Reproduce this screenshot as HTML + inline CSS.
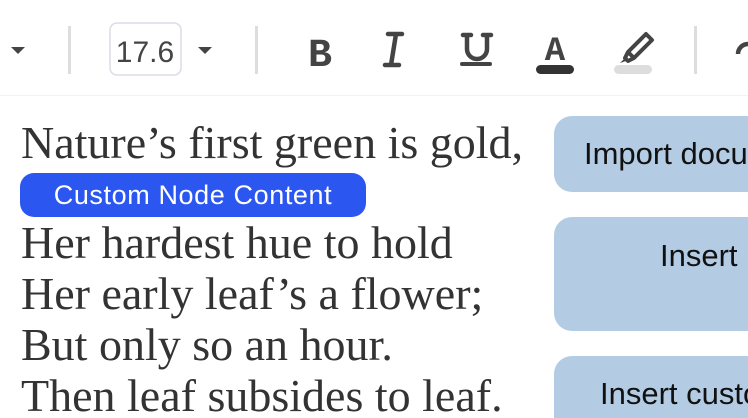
<!DOCTYPE html>
<html style="overflow:hidden"><head><meta charset="utf-8"><style>
html,body{overflow:hidden}
body{margin:0;width:748px;height:418px;background:#fff;position:relative;font-family:"Liberation Sans",sans-serif}
.tb{position:absolute;left:0;top:0;width:748px;height:95px;background:#fff;border-bottom:1px solid #f2f2f2}
.sep{position:absolute;top:26px;width:3px;height:48px;background:#ddd}
.line{position:absolute;left:21px;font-family:"Liberation Serif",serif;font-size:46px;color:#333;white-space:nowrap;line-height:1}
.chip{position:absolute;left:20px;top:173px;width:346px;height:44px;border-radius:14px;background:#2b57f0;color:#fff;font-size:27px;letter-spacing:0.6px;line-height:44px;text-align:center}
.clip{position:absolute;left:0;top:0;width:748px;height:418px;overflow:hidden}
.btn{position:absolute;left:554px;width:220px;background:#b3cbe3;border-radius:18px;font-size:31px;color:#111;white-space:nowrap;overflow:hidden}
</style></head><body>
<div class="tb">
<svg width="748" height="95" style="position:absolute;left:0;top:0">
<path d="M11 47h14l-7 7z" fill="#444"/>
<path d="M198 47h14l-7 7z" fill="#444"/>
<rect x="110" y="23" width="71" height="52" rx="7" fill="none" stroke="#d8dde6" stroke-width="1.5"/>
<text x="145" y="62" font-family="Liberation Sans" font-size="30" fill="#444" text-anchor="middle">17.6</text>
<text x="320" y="66" font-family="Liberation Mono" font-weight="bold" font-size="40" fill="#444" text-anchor="middle">B</text>
<path d="M388 34h14M385 65h14M396 34l-5 31" stroke="#444" stroke-width="4.5" stroke-linecap="round" fill="none"/>
<path d="M463 35h8M483 35h8M467 35v14a10 10 0 0 0 20 0v-14" stroke="#444" stroke-width="4.5" stroke-linecap="round" fill="none"/>
<path d="M462 64h28" stroke="#444" stroke-width="4" stroke-linecap="round"/>
<text x="555" y="60" font-family="Liberation Mono" font-weight="bold" font-size="34" fill="#444" text-anchor="middle">A</text>
<rect x="536" y="65" width="38" height="9" rx="4.5" fill="#333"/>
<path d="M628 52l18-18 6 6-18 18zM628 52l-3 6 3 3 6-3" stroke="#444" stroke-width="4" fill="none" stroke-linejoin="round"/>
<path d="M620 63l6-6 3 3z" fill="#444"/>
<rect x="614" y="65" width="38" height="9" rx="4.5" fill="#ddd"/>
<path d="M748 44a10 10 0 0 0-10 10" stroke="#444" stroke-width="4.5" fill="none"/>
</svg>
<div class="sep" style="left:68px"></div>
<div class="sep" style="left:255px"></div>
<div class="sep" style="left:694px"></div>
</div>
<div class="line" style="top:120px">Nature’s first green is gold,</div>
<div class="chip">Custom Node Content</div>
<div class="line" style="top:220px">Her hardest hue to hold</div>
<div class="line" style="top:271px">Her early leaf’s a flower;</div>
<div class="line" style="top:322px">But only so an hour.</div>
<div class="line" style="top:373px">Then leaf subsides to leaf.</div>
<div class="clip">
<div class="btn" style="top:116px;height:76px;line-height:76px;padding-left:30px">Import document</div>
<div class="btn" style="top:217px;height:114px;padding-top:19px;box-sizing:border-box;padding-left:106px;line-height:40px">Insert</div>
<div class="btn" style="top:356px;height:80px;padding-left:46px;line-height:76px">Insert custom</div>
</div>
</body></html>
